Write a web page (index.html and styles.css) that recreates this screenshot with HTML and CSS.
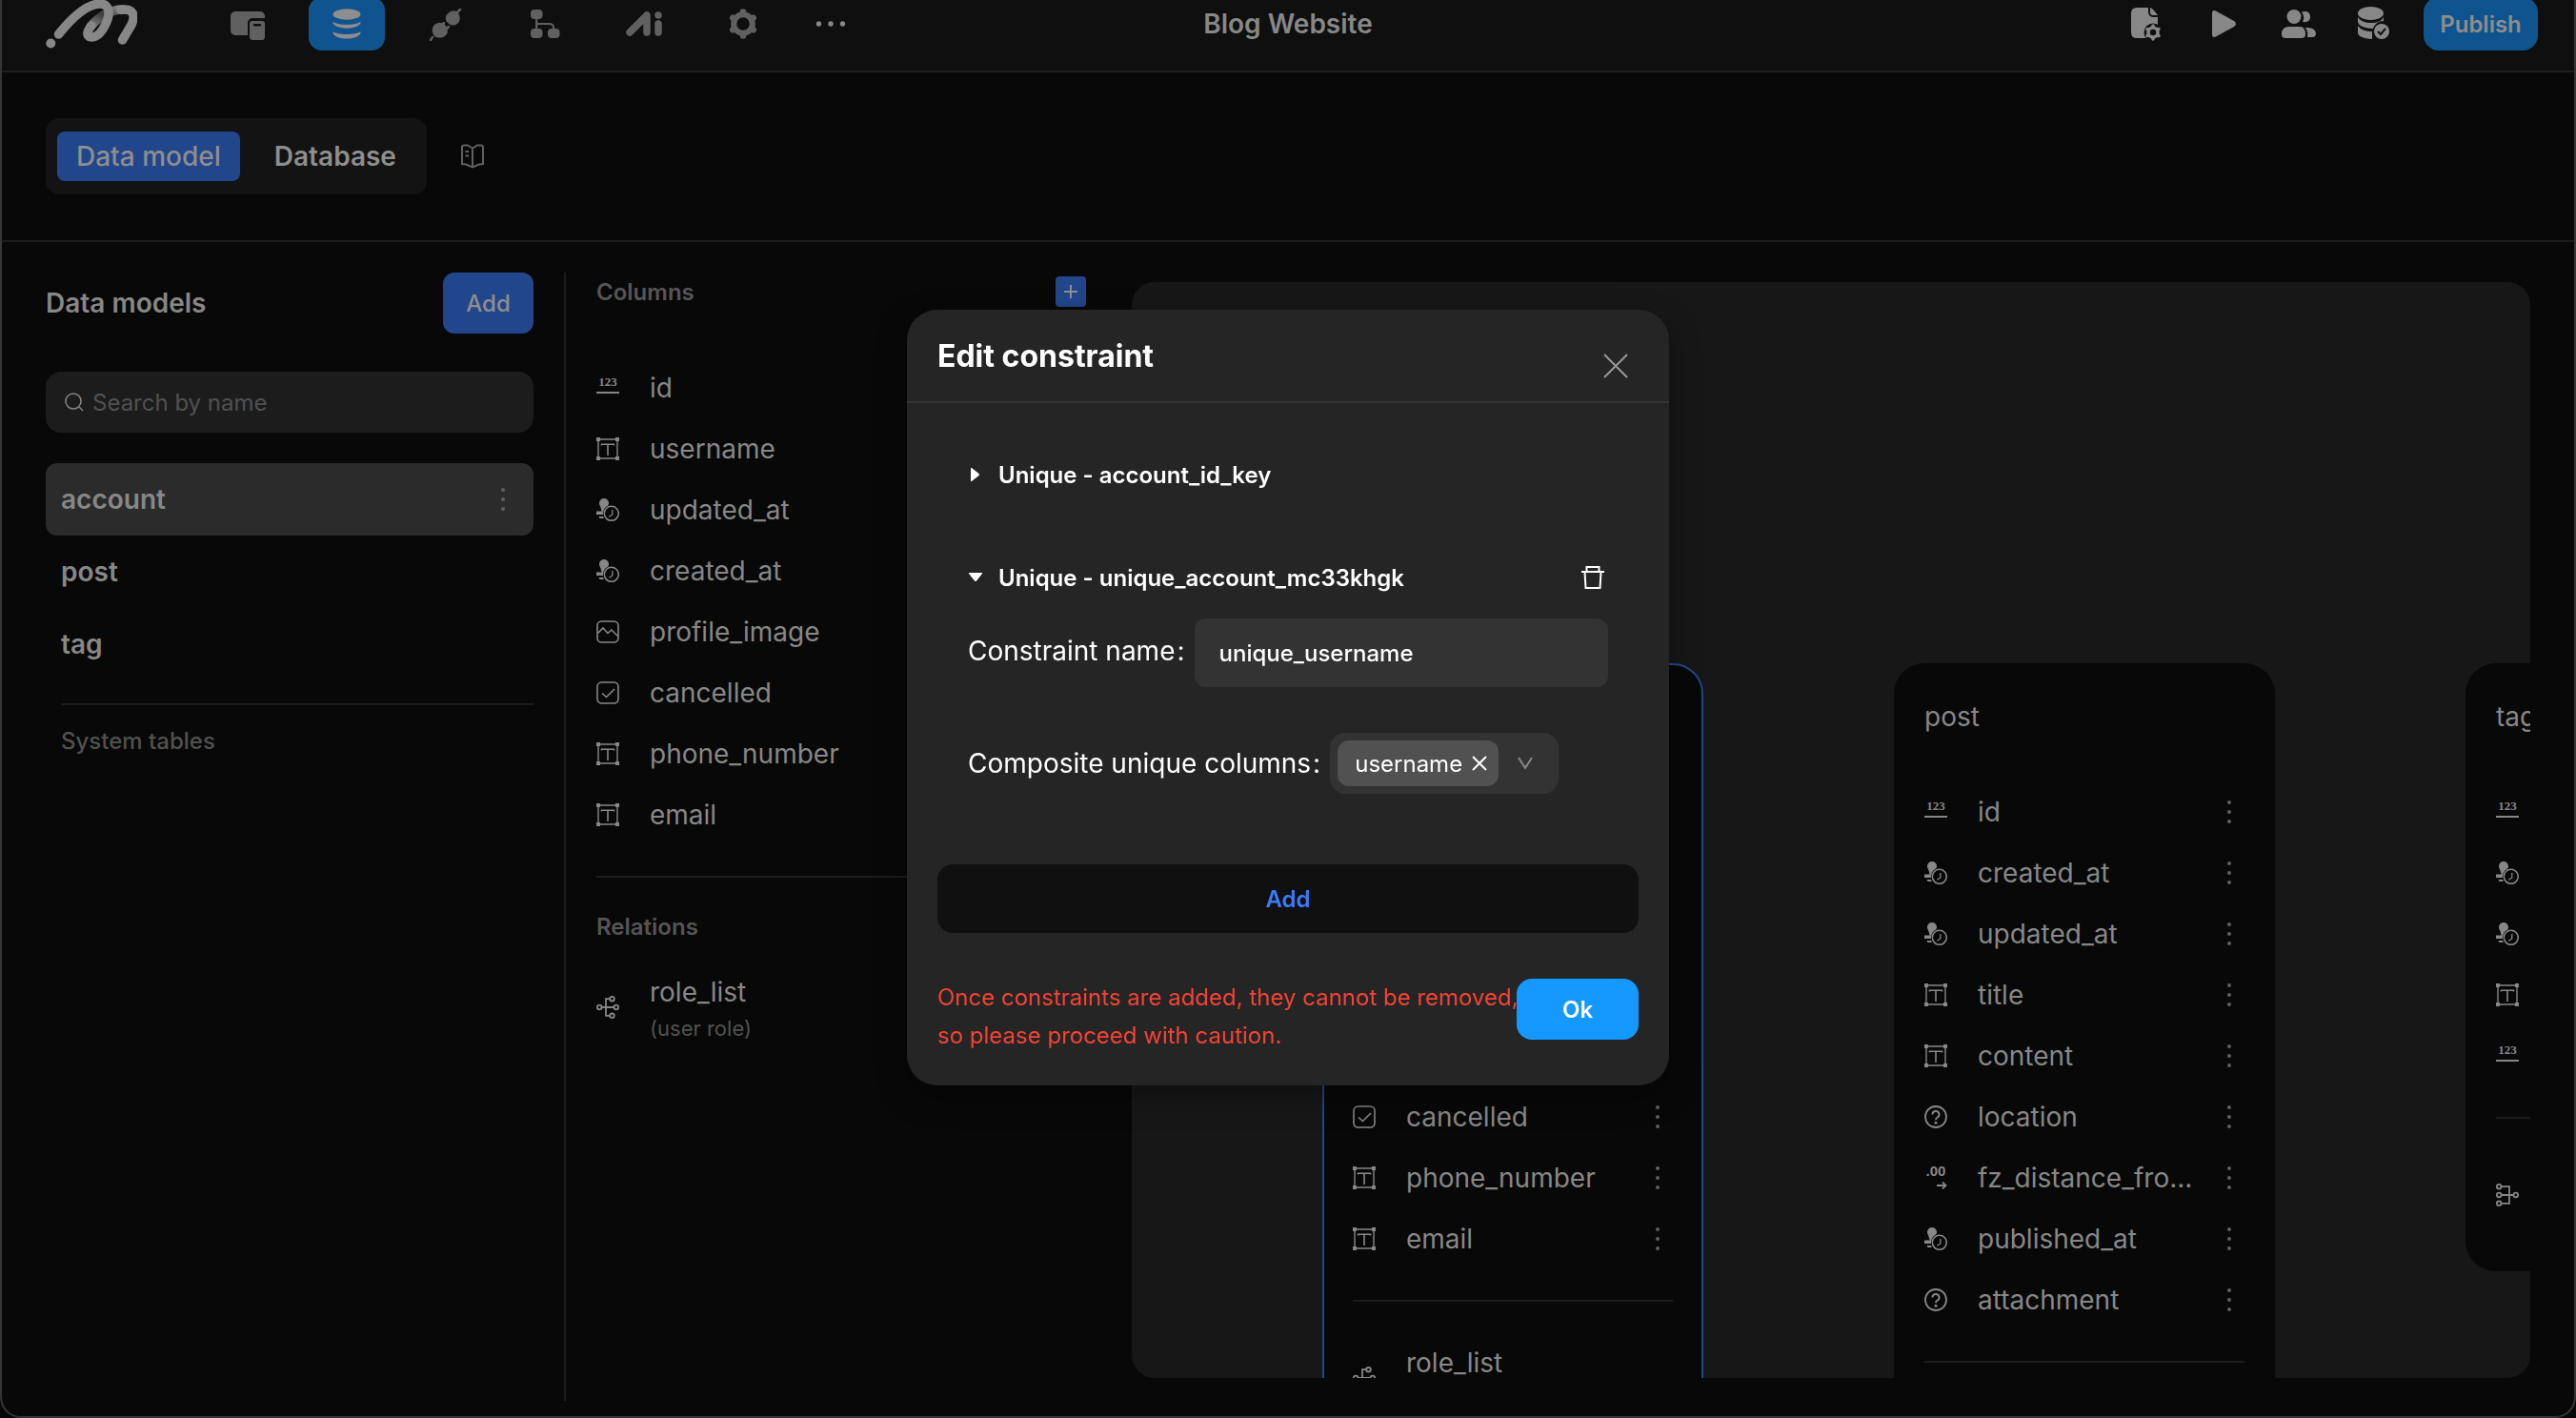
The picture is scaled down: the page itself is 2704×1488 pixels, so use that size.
FILE: index.html
```
<!DOCTYPE html>
<html lang="en">
<head>
    <meta charset="UTF-8">
    <title>Blog Website - Data model</title>
    <link rel="stylesheet" href="styles.css">
</head>
<body>
    <!-- icon sprite -->
    <svg class="sprite" aria-hidden="true">
        <symbol id="i-int" viewBox="0 0 24 24">
            <text x="12" y="10" text-anchor="middle" font-family="Liberation Serif, serif" font-weight="700" font-size="13" fill="currentColor">123</text>
            <path d="M0 17h24" stroke="currentColor" stroke-width="2"/>
        </symbol>
        <symbol id="i-text" viewBox="0 0 24 24">
            <path d="M2 2h20v20H2z" fill="none" stroke="currentColor" stroke-width="1.4"/>
            <path d="M0 0h4v4H0zM20 0h4v4h-4zM0 20h4v4H0zM20 20h4v4h-4z" fill="currentColor"/>
            <path d="M5.500 8.500V7.200H18.500V8.500M12 7.200V19" fill="none" stroke="currentColor" stroke-width="1.600"/>
        </symbol>
        <symbol id="i-time" viewBox="0 0 24 24">
            <circle cx="8" cy="5" r="5" fill="currentColor"/>
            <path d="M3.800 7h8.400l-2 7h-4.400zM0 13.500h8v3.500H0zM2.500 19h5v2h-4z" fill="currentColor"/>
            <circle cx="15.800" cy="15.800" r="9" fill="#080808"/>
            <circle cx="15.800" cy="15.800" r="7.500" fill="none" stroke="currentColor" stroke-width="1.500"/>
            <path d="M16.800 12v5l-3.500 2.200" fill="none" stroke="currentColor" stroke-width="1.300"/>
        </symbol>
        <symbol id="i-image" viewBox="0 0 24 24">
            <rect x="1" y="1" width="22" height="22" rx="4.500" fill="none" stroke="currentColor" stroke-width="1.600"/>
            <path d="M1.500 13.500L7 8l5 5.500 4-3.500 6.500 6.500" fill="none" stroke="currentColor" stroke-width="1.600"/>
        </symbol>
        <symbol id="i-bool" viewBox="0 0 24 24">
            <rect x="1" y="1" width="22" height="22" rx="4.500" fill="none" stroke="currentColor" stroke-width="1.600"/>
            <path d="M6 12.500l4.500 4L19 8" fill="none" stroke="currentColor" stroke-width="1.600"/>
        </symbol>
        <symbol id="i-other" viewBox="0 0 24 24">
            <circle cx="12" cy="12" r="11" fill="none" stroke="currentColor" stroke-width="1.800"/>
            <path d="M8.500 9.500a3.500 3.500 0 1 1 5.200 3c-1.200.700-1.700 1.300-1.700 2.700" fill="none" stroke="currentColor" stroke-width="2"/>
            <circle cx="12" cy="18.200" r="1.500" fill="currentColor"/>
        </symbol>
        <symbol id="i-float" viewBox="0 0 24 24">
            <text x="12" y="10" text-anchor="middle" font-family="Liberation Sans, sans-serif" font-weight="700" font-size="15" fill="currentColor">.00</text>
            <path d="M13 20h9M19 16.500l3.500 3.500-3.500 3.500" fill="none" stroke="currentColor" stroke-width="1.800"/>
        </symbol>
        <symbol id="i-rel" viewBox="0 0 24 24">
            <g fill="none" stroke="currentColor" stroke-width="1.800">
                <circle cx="3.200" cy="12" r="2.300"/><circle cx="16.500" cy="3.200" r="2.300"/>
                <circle cx="20.800" cy="12" r="2.300"/><circle cx="16.500" cy="20.800" r="2.300"/>
                <path d="M5.500 12h13M14.200 3.200H10v17.600h4.200"/>
            </g>
        </symbol>
        <symbol id="i-rel-in" viewBox="0 0 24 24">
            <g fill="none" stroke="currentColor" stroke-width="1.800">
                <circle cx="3.200" cy="3.200" r="2.300"/><circle cx="3.200" cy="12" r="2.300"/>
                <circle cx="3.200" cy="20.800" r="2.300"/><circle cx="20.800" cy="12" r="2.300"/>
                <path d="M5.500 12h13M5.500 3.200H14v17.600H5.500"/>
            </g>
        </symbol>
        <symbol id="i-more" viewBox="0 0 8 24">
            <g fill="currentColor"><circle cx="4" cy="2" r="2"/><circle cx="4" cy="12" r="2"/><circle cx="4" cy="22" r="2"/></g>
        </symbol>
    </svg>

    <div class="app">
        <header class="topbar">
            <div class="topbar-left">
                <svg class="logo" viewBox="0 0 96 56" aria-label="Home">
                    <defs>
                        <linearGradient id="fold" x1="0" y1="1" x2="1" y2="0">
                            <stop offset="0" stop-color="#878787"/><stop offset=".55" stop-color="#3c3c3c"/><stop offset="1" stop-color="#878787"/>
                        </linearGradient>
                    </defs>
                    <g fill="none" stroke-linecap="round" stroke-width="9.500">
                        <path d="M47 31C55 21 68 13 81 13" stroke="url(#fold)"/>
                        <path d="M79 13.300C91 12 95 18 90 29L80.500 45" stroke="#878787"/>
                        <path d="M13.500 39C28 21 44 7 57 7C68 7 68 19 62 30C58 38 53 42 48 42C43 42 42 37 48 30" stroke="#878787"/>
                    </g>
                    <circle cx="5.300" cy="48.500" r="5" fill="#878787"/>
                </svg>
                <nav class="main-nav">
                    <button class="nav-btn" aria-label="Pages">
                        <svg width="36" height="36" viewBox="0 0 36 36" fill="currentColor">
                            <path d="M5 5h26a5 5 0 0 1 5 5v2H23a5 5 0 0 0-5 5v13H5a5 5 0 0 1-5-5V10a5 5 0 0 1 5-5z"/>
                            <path fill-rule="evenodd" d="M23 15h10a3 3 0 0 1 3 3v14a3 3 0 0 1-3 3H23a3 3 0 0 1-3-3V18a3 3 0 0 1 3-3zm2 3a1 1 0 0 0 0 2.500h6a1 1 0 0 0 0-2.500z"/>
                        </svg>
                    </button>
                    <button class="nav-btn active" aria-label="Data">
                        <svg width="36" height="36" viewBox="0 0 36 36" fill="currentColor">
                            <ellipse cx="18" cy="8" rx="14.500" ry="5.800"/>
                            <path d="M3.500 15.500C7 20 29 20 32.500 15.500C34 25 2 25 3.500 15.500zM3.500 26C7 30 29 30 32.500 26C34 36 2 36 3.500 26z"/>
                        </svg>
                    </button>
                    <button class="nav-btn" aria-label="Integrations">
                        <svg width="36" height="36" viewBox="0 0 36 36" fill="currentColor">
                            <path d="M18 10c3-5 7-7 11-5c4 3 5 8 2 12c-3 3-6 3-8 2c-4-2-6-5-5-9z"/>
                            <path d="M6 19c4-3 8-3 11 0s4 8 1 11c-4 4-9 3-12 1c-3-4-3-9 0-12z"/>
                            <path d="M29 7l4-4M4 32l-2 3M14 20l2-3M18 24l3-3" stroke="currentColor" stroke-width="2.500" stroke-linecap="round"/>
                        </svg>
                    </button>
                    <button class="nav-btn" aria-label="Workflows">
                        <svg width="36" height="36" viewBox="0 0 36 36" fill="currentColor">
                            <rect x="3" y="3" width="12.500" height="10" rx="4"/>
                            <rect x="3" y="23" width="12.500" height="10" rx="4"/>
                            <rect x="21" y="23" width="12.500" height="10" rx="4"/>
                            <path d="M9.200 12v12M9.200 18h14q4 0 4 6" fill="none" stroke="currentColor" stroke-width="2.200"/>
                        </svg>
                    </button>
                    <button class="nav-btn" aria-label="AI">
                        <svg width="40" height="36" viewBox="0 0 40 36" fill="none" stroke="currentColor" stroke-width="7.500" stroke-linecap="round" stroke-linejoin="round">
                            <path d="M5 27L23 9V27M35 18V27M35 9v.1"/>
                        </svg>
                    </button>
                    <button class="nav-btn" aria-label="Settings">
                        <svg width="36" height="36" viewBox="0 0 36 36" fill="none" stroke="currentColor">
                            <circle cx="18" cy="18" r="9.800" stroke-width="6"/>
                            <path d="M18 5.500v1M18 29.500v1M7.200 11.700l1 .6M27.800 23.700l1 .6M7.200 24.300l1-.6M27.800 12.300l1-.6" stroke-width="6.500" stroke-linecap="round"/>
                        </svg>
                    </button>
                </nav>
                <button class="icon-btn more-nav" aria-label="More">
                    <svg width="32" height="8" viewBox="0 0 32 8" fill="currentColor"><circle cx="3.500" cy="4" r="2.700"/><circle cx="16" cy="4" r="2.700"/><circle cx="28.500" cy="4" r="2.700"/></svg>
                </button>
            </div>
            <h1 class="project-name">Blog Website</h1>
            <div class="topbar-right">
                <button class="icon-btn" aria-label="Page settings">
                    <svg width="36" height="36" viewBox="0 0 36 36" fill="currentColor">
                        <path d="M6 1h12v4q0 6 6 6h4v8q-12 1-12 14H6q-6 0-6-6V7q0-6 6-6z"/>
                        <path d="M20 1q2 0 8 8h-5q-3 0-3-3z"/>
                        <circle cx="23" cy="27" r="9.500" fill="#0f0f0f"/>
                        <circle cx="23" cy="27" r="5" fill="none" stroke="currentColor" stroke-width="3.500"/>
                        <path d="M23 20v1M23 33v1M17 23.500l.8.500M28.200 30l.8.500M17 30.500l.8-.5M28.200 24l.8-.5" stroke="currentColor" stroke-width="3.500" stroke-linecap="round"/>
                    </svg>
                </button>
                <button class="icon-btn" aria-label="Preview">
                    <svg width="36" height="36" viewBox="0 0 36 36" fill="currentColor"><path d="M6 7q0-4 4-2.500L29 15q4 3 0 6L10 31.500Q6 33 6 29z"/></svg>
                </button>
                <button class="icon-btn" aria-label="Collaborators">
                    <svg width="36" height="36" viewBox="0 0 36 36" fill="currentColor">
                        <circle cx="13" cy="10.500" r="7.500"/>
                        <path d="M8 21h11q6 0 6 8q0 4-4 4H4q-4 0-4-4q0-8 8-8zM21 5.500q9-2 9 5.500q0 6-8 5q3-5-1-10.500zM25 22q10-1 11 6q0 4-4 4h-5q1-6-2-10z"/>
                    </svg>
                </button>
                <button class="icon-btn" aria-label="Data sync">
                    <svg width="36" height="36" viewBox="0 0 36 36" fill="currentColor">
                        <ellipse cx="14.500" cy="7" rx="13.500" ry="7"/>
                        <path d="M1 11q4 6 14 6t13-6v4q-8 0-11 8q-16-1-16-8zM1 20q4 6 15 6v8Q1 33 1 27z"/>
                        <circle cx="26" cy="26" r="8"/>
                        <path d="M22 26l3 3 5-6" fill="none" stroke="#0f0f0f" stroke-width="2"/>
                    </svg>
                </button>
                <button class="publish-btn">Publish</button>
            </div>
        </header>

        <div class="subbar">
            <div class="tabs">
                <button class="tab active">Data model</button>
                <button class="tab">Database</button>
            </div>
            <a class="docs-link" href="#" aria-label="Documentation">
                <svg width="24" height="26" viewBox="0 0 24 26" fill="none" stroke="currentColor" stroke-width="2">
                    <path d="M12 4.500L7 1.500H3Q1 1.500 1 3.500V21l4 .5 7 3 7-3 4-.5V3.500q0-2-2-2h-4zM12 4.500v20M4.500 8H8M4.500 12.500H8"/>
                </svg>
            </a>
        </div>

        <main class="workspace">
            <aside class="models">
                <div class="models-head">
                    <h2>Data models</h2>
                    <button class="add-btn">Add</button>
                </div>
                <label class="search">
                    <svg width="20" height="20" viewBox="0 0 20 20" fill="none" stroke="currentColor" stroke-width="1.500"><circle cx="9" cy="9" r="8"/><path d="M15 15l4 4"/></svg>
                    <input type="text" placeholder="Search by name" aria-label="Search by name">
                </label>
                <ul class="model-list">
                    <li class="active"><span>account</span><button class="icon-btn dots" aria-label="account menu"><svg><use href="#i-more"/></svg></button></li>
                    <li><span>post</span></li>
                    <li><span>tag</span></li>
                </ul>
                <p class="system-tables">System tables</p>
            </aside>

            <section class="columns">
                <div class="columns-head">
                    <h3>Columns</h3>
                    <button class="plus-btn" aria-label="Add column"><svg width="16" height="16" viewBox="0 0 16 16" stroke="currentColor" stroke-width="2"><path d="M8 1v14M1 8h14"/></svg></button>
                </div>
                <ul class="fields">
                    <li><svg><use href="#i-int"/></svg><span>id</span></li>
                    <li><svg><use href="#i-text"/></svg><span>username</span></li>
                    <li><svg><use href="#i-time"/></svg><span>updated_at</span></li>
                    <li><svg><use href="#i-time"/></svg><span>created_at</span></li>
                    <li><svg><use href="#i-image"/></svg><span>profile_image</span></li>
                    <li><svg><use href="#i-bool"/></svg><span>cancelled</span></li>
                    <li><svg><use href="#i-text"/></svg><span>phone_number</span></li>
                    <li><svg><use href="#i-text"/></svg><span>email</span></li>
                </ul>
                <hr>
                <h3 class="relations-title">Relations</h3>
                <div class="relation">
                    <svg><use href="#i-rel"/></svg>
                    <div><div class="rel-name">role_list</div><div class="rel-type">(user role)</div></div>
                </div>
            </section>

            <section class="canvas">
                <article class="node node-account selected">
                    <h4>account</h4>
                    <ul class="fields">
                        <li><svg><use href="#i-int"/></svg><span>id</span><button class="icon-btn dots" aria-label="menu"><svg><use href="#i-more"/></svg></button></li>
                        <li><svg><use href="#i-text"/></svg><span>username</span><button class="icon-btn dots" aria-label="menu"><svg><use href="#i-more"/></svg></button></li>
                        <li><svg><use href="#i-time"/></svg><span>updated_at</span><button class="icon-btn dots" aria-label="menu"><svg><use href="#i-more"/></svg></button></li>
                        <li><svg><use href="#i-time"/></svg><span>created_at</span><button class="icon-btn dots" aria-label="menu"><svg><use href="#i-more"/></svg></button></li>
                        <li><svg><use href="#i-image"/></svg><span>profile_image</span><button class="icon-btn dots" aria-label="menu"><svg><use href="#i-more"/></svg></button></li>
                        <li><svg><use href="#i-bool"/></svg><span>cancelled</span><button class="icon-btn dots" aria-label="menu"><svg><use href="#i-more"/></svg></button></li>
                        <li><svg><use href="#i-text"/></svg><span>phone_number</span><button class="icon-btn dots" aria-label="menu"><svg><use href="#i-more"/></svg></button></li>
                        <li><svg><use href="#i-text"/></svg><span>email</span><button class="icon-btn dots" aria-label="menu"><svg><use href="#i-more"/></svg></button></li>
                    </ul>
                    <hr>
                    <div class="relation">
                        <svg><use href="#i-rel"/></svg>
                        <div><div class="rel-name">role_list</div><div class="rel-type">(user role)</div></div>
                    </div>
                </article>
                <article class="node node-post">
                    <h4>post</h4>
                    <ul class="fields">
                        <li><svg><use href="#i-int"/></svg><span>id</span><button class="icon-btn dots" aria-label="menu"><svg><use href="#i-more"/></svg></button></li>
                        <li><svg><use href="#i-time"/></svg><span>created_at</span><button class="icon-btn dots" aria-label="menu"><svg><use href="#i-more"/></svg></button></li>
                        <li><svg><use href="#i-time"/></svg><span>updated_at</span><button class="icon-btn dots" aria-label="menu"><svg><use href="#i-more"/></svg></button></li>
                        <li><svg><use href="#i-text"/></svg><span>title</span><button class="icon-btn dots" aria-label="menu"><svg><use href="#i-more"/></svg></button></li>
                        <li><svg><use href="#i-text"/></svg><span>content</span><button class="icon-btn dots" aria-label="menu"><svg><use href="#i-more"/></svg></button></li>
                        <li><svg><use href="#i-other"/></svg><span>location</span><button class="icon-btn dots" aria-label="menu"><svg><use href="#i-more"/></svg></button></li>
                        <li><svg><use href="#i-float"/></svg><span>fz_distance_fro...</span><button class="icon-btn dots" aria-label="menu"><svg><use href="#i-more"/></svg></button></li>
                        <li><svg><use href="#i-time"/></svg><span>published_at</span><button class="icon-btn dots" aria-label="menu"><svg><use href="#i-more"/></svg></button></li>
                        <li><svg><use href="#i-other"/></svg><span>attachment</span><button class="icon-btn dots" aria-label="menu"><svg><use href="#i-more"/></svg></button></li>
                    </ul>
                    <hr>
                    <div class="relation"></div>
                </article>
                <article class="node node-tag">
                    <h4>tag</h4>
                    <ul class="fields">
                        <li><svg><use href="#i-int"/></svg></li>
                        <li><svg><use href="#i-time"/></svg></li>
                        <li><svg><use href="#i-time"/></svg></li>
                        <li><svg><use href="#i-text"/></svg></li>
                        <li><svg><use href="#i-int"/></svg></li>
                    </ul>
                    <hr>
                    <div class="relation"><svg><use href="#i-rel-in"/></svg></div>
                </article>
            </section>
        </main>
    </div>

    <div class="overlay">
        <div class="modal" role="dialog" aria-labelledby="modal-title">
            <div class="modal-head">
                <h2 id="modal-title">Edit constraint</h2>
                <button class="icon-btn close-btn" aria-label="Close"><svg width="26" height="26" viewBox="0 0 26 26" stroke="currentColor" stroke-width="2"><path d="M1 1l24 24M25 1L1 25"/></svg></button>
            </div>
            <div class="modal-body">
                <div class="constraint-row">
                    <button class="toggle"><svg width="16" height="16" viewBox="0 0 16 16" fill="currentColor"><path d="M3 1.500q0-1 1-.5l7.500 6q1 1 0 2L4 15q-1 .5-1-.5z"/></svg>Unique - account_id_key</button>
                </div>
                <div class="constraint-row">
                    <button class="toggle"><svg width="16" height="16" viewBox="0 0 16 16" fill="currentColor"><path d="M1.500 3q-1 0-.5 1l6 7.500q1 1 2 0L15 4q.5-1-.5-1z"/></svg>Unique - unique_account_mc33khgk</button>
                    <button class="icon-btn trash" aria-label="Delete constraint"><svg width="24" height="26" viewBox="0 0 24 26" fill="none" stroke="currentColor" stroke-width="2"><path d="M0 7h24M5.500 7V2h13v5M3.500 7l1 17h15l1-17"/></svg></button>
                </div>
                <div class="form-row name-row">
                    <label for="constraint-name">Constraint name<span class="colon">:</span></label>
                    <input id="constraint-name" type="text" value="unique_username">
                </div>
                <div class="form-row">
                    <label for="unique-columns">Composite unique columns<span class="colon">:</span></label>
                    <div class="multi-select">
                        <span class="chip">username<button class="icon-btn" aria-label="Remove username"><svg width="16" height="16" viewBox="0 0 16 16" stroke="currentColor" stroke-width="2"><path d="M1 1l14 14M15 1L1 15"/></svg></button></span>
                        <div class="arrow">
                            <select id="unique-columns"><option></option></select>
                            <svg width="16" height="14" viewBox="0 0 16 14" fill="none" stroke="currentColor" stroke-width="2"><path d="M1 1l7 11 7-11"/></svg>
                        </div>
                    </div>
                </div>
            </div>
            <button class="add-constraint">Add</button>
            <div class="modal-foot">
                <p>Once constraints are added, they cannot be removed,<br>so please proceed with caution.</p>
                <button class="ok-btn">Ok</button>
            </div>
        </div>
    </div>
</body>
</html>
```

FILE: styles.css
```
* { box-sizing: border-box; }
body { margin: 0; background: #080808; color: #878787; font-family: Inter, "Liberation Sans", sans-serif; font-size: 28px; overflow: hidden; }
h1, h2, h3, h4, p, ul { margin: 0; padding: 0; }
ul { list-style: none; }
button, input, select { font-family: inherit; border: none; margin: 0; padding: 0; }
button { cursor: pointer; }
hr { border: none; height: 2px; margin: 32px 0 0; background: #1c1c1c; }
.sprite { display: none; }
.app { display: flex; flex-direction: column; height: 100vh; border: 2px solid #353535; border-top: none; border-radius: 0 0 22px 22px; overflow: hidden; }
.icon-btn { display: flex; align-items: center; justify-content: center; background: none; color: inherit; }

/* top bar */
.topbar { display: grid; grid-template-columns: 1fr auto 1fr; align-items: start; height: 76px; padding: 0 38px; background: #0f0f0f; border-bottom: 2px solid #1e1e1e; flex-shrink: 0; }
.topbar-left, .topbar-right, .project-name { height: 56px; margin-top: -3px; display: flex; align-items: center; }
.topbar-left { padding-left: 8px; }
.logo { width: 96px; height: 56px; margin-right: 76px; }
.main-nav { display: flex; gap: 24px; }
.nav-btn { display: flex; align-items: center; justify-content: center; width: 80px; height: 56px; border-radius: 14px; background: none; color: #606060; }
.nav-btn.active { background: #0f548e; color: #8e8e8e; }
.more-nav { margin-left: 36px; }
.project-name { font-size: 28px; font-weight: 600; }
.topbar-right { justify-content: flex-end; gap: 43px; }
.publish-btn { width: 120px; height: 56px; margin-left: -9px; border-radius: 16px; background: #0f548e; color: #8e8e8e; font-size: 24px; font-weight: 600; }

/* tabs */
.subbar { display: flex; align-items: center; gap: 36px; padding: 48px 46px; border-bottom: 2px solid #1c1c1c; flex-shrink: 0; }
.tabs { display: flex; gap: 16px; padding: 14px 12px; border-radius: 14px; background: #131313; }
.tab { height: 52px; padding: 0 20px; border-radius: 8px; background: none; color: #8e8e8e; font-size: 28px; font-weight: 600; }
.tab.active { background: #22468b; font-weight: 500; }
.docs-link { display: flex; color: #606060; }

.workspace { display: flex; flex: 1; min-height: 0; padding: 32px 46px 16px 0; }

/* left panel */
.models { width: 592px; padding: 0 32px 0 46px; border-right: 2px solid #1c1c1c; flex-shrink: 0; }
.models-head { display: flex; align-items: center; justify-content: space-between; }
.models-head h2 { font-size: 28px; font-weight: 600; }
.add-btn { width: 95px; height: 64px; border-radius: 12px; background: #22468b; color: #8e8e8e; font-size: 24px; font-weight: 500; }
.search { display: flex; align-items: center; gap: 9px; height: 64px; margin: 40px 0 32px; padding: 0 20px; border-radius: 16px; background: #1c1c1c; }
.search input { flex: 1; background: none; color: #878787; font-size: 24px; outline: none; }
.search input::placeholder { color: #515151; }
.model-list { padding-bottom: 24px; }
.model-list li { display: flex; align-items: center; justify-content: space-between; height: 76px; padding: 0 28px 0 16px; border-radius: 12px; font-size: 28px; font-weight: 600; }
.model-list li.active { background: #2b2b2b; }
.system-tables { margin-left: 16px; padding-top: 20px; border-top: 2px solid #1c1c1c; color: #515151; font-size: 24px; font-weight: 500; line-height: 36px; }
.dots { color: #606060; }
.dots svg { width: 8px; height: 24px; }

/* columns panel */
.columns { width: 594px; padding: 0 48px 0 32px; flex-shrink: 0; }
.columns-head { display: flex; align-items: center; justify-content: space-between; height: 40px; margin-bottom: 49px; }
.columns h3 { color: #555; font-size: 24px; font-weight: 600; }
.plus-btn { display: flex; align-items: center; justify-content: center; width: 32px; height: 32px; border-radius: 4px; background: #22468b; color: #8e8e8e; }
.fields li { display: flex; align-items: center; height: 64px; }
.fields li > svg, .relation > svg { width: 24px; height: 24px; margin-right: 32px; flex-shrink: 0; }
.fields li span { flex: 1; white-space: nowrap; }
.columns .relations-title { margin: 36px 0 30px; line-height: 32px; }
.relation { display: flex; align-items: center; height: 76px; }
.rel-name { line-height: 44px; }
.rel-type { color: #515151; font-size: 22px; line-height: 32px; }

/* canvas */
.canvas { position: relative; flex: 1; margin: 10px 0 24px; border-radius: 24px; background: #171717; overflow: hidden; }
.node { position: absolute; top: 400px; width: 400px; padding: 32px; border-radius: 32px; background: #080808; }
.node-account { left: 200px; }
.node-post { left: 800px; }
.node-tag { left: 1400px; }
.node.selected { border: 2px solid #22468b; padding: 30px; }
.node h4 { font-size: 28px; font-weight: 400; line-height: 48px; margin-bottom: 44px; }
.node .fields li { padding-right: 12px; }
.node .relation { height: 96px; margin-top: 32px; }

/* modal */
.overlay { position: fixed; inset: 0; display: flex; align-items: center; justify-content: center; padding-bottom: 24px; }
.modal { width: 800px; padding-bottom: 32px; border-radius: 32px; background: #252525; color: #fff; box-shadow: 0 12px 32px rgba(0, 0, 0, .35); }
.modal-head { display: flex; align-items: center; justify-content: space-between; height: 98px; padding: 0 43px 0 32px; border-bottom: 2px solid #333; }
.modal-head h2 { font-size: 32px; font-weight: 700; }
.close-btn { padding-top: 22px; color: #999; }
.modal-body { padding: 53px 64px 74px; }
.constraint-row { display: flex; align-items: center; justify-content: space-between; height: 44px; margin-bottom: 64px; }
.constraint-row:nth-child(2) { margin-bottom: 21px; }
.toggle { display: flex; align-items: center; gap: 16px; background: none; color: #fff; font-size: 24px; font-weight: 600; }
.trash { padding-right: 4px; }
.form-row { display: flex; align-items: center; }
.form-row label { flex-shrink: 0; }
.colon { margin: 0 10px 0 2px; }
.name-row { margin-bottom: 48px; }
.name-row label { padding-bottom: 4px; }
.name-row input { flex: 1; min-width: 0; height: 72px; padding: 0 26px; border-radius: 12px; background: #333; color: #fff; font-size: 24px; font-weight: 500; }
.multi-select { display: flex; align-items: center; width: 240px; height: 64px; padding: 8px; border-radius: 16px; background: #333; }
.chip { display: flex; align-items: center; gap: 10px; height: 48px; padding: 0 12px 0 18px; border-radius: 12px; background: #515151; font-size: 24px; }
.arrow { display: flex; flex: 1; align-items: center; justify-content: center; position: relative; color: #888; }
.arrow select { position: absolute; inset: 0; width: 100%; opacity: 0; }
.add-constraint { display: block; width: calc(100% - 64px); height: 72px; margin: 0 32px 48px; border-radius: 16px; background: #101010; color: #3b7bf9; font-size: 24px; font-weight: 600; }
.modal-foot { display: flex; align-items: flex-start; justify-content: space-between; padding: 0 32px; }
.modal-foot p { flex: 1; min-width: 0; color: #f44336; font-size: 24px; line-height: 40px; white-space: nowrap; }
.ok-btn { width: 128px; height: 64px; border-radius: 16px; background: #1598ff; color: #fff; font-size: 24px; font-weight: 600; flex-shrink: 0; }
```
